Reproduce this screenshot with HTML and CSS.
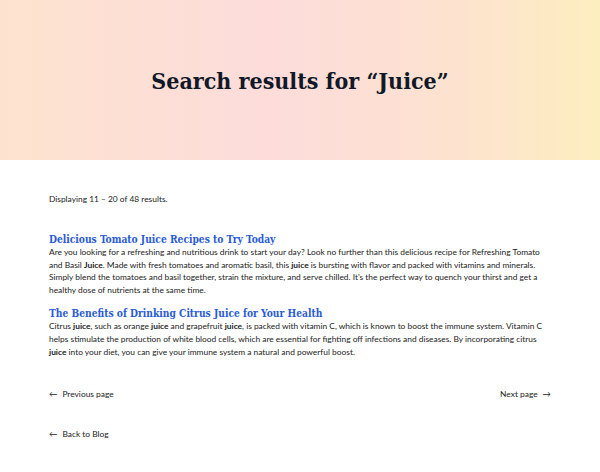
FILE: index.html
```html
<!DOCTYPE html>
<html lang="en">
<head>
<meta charset="utf-8">
<title>Search results for “Juice”</title>
<link rel="stylesheet" href="styles.css">
</head>
<body>
<header class="hero">
  <h1 class="hero-title">Search results for “Juice”</h1>
</header>
<main class="content">
  <p class="count">Displaying 11 – 20 of 48 results.</p>
  <article class="result">
    <h2 class="result-title"><a href="#">Delicious Tomato Juice Recipes to Try Today</a></h2>
    <p class="result-text">Are you looking for a refreshing and nutritious drink to start your day? Look no further than this delicious recipe for Refreshing Tomato and Basil <b>Juice</b>. Made with fresh tomatoes and aromatic basil, this <b>juice</b> is bursting with flavor and packed with vitamins and minerals. Simply blend the tomatoes and basil together, strain the mixture, and serve chilled. It's the perfect way to quench your thirst and get a healthy dose of nutrients at the same time.</p>
  </article>
  <article class="result">
    <h2 class="result-title"><a href="#">The Benefits of Drinking Citrus Juice for Your Health</a></h2>
    <p class="result-text">Citrus <b>juice</b>, such as orange <b>juice</b> and grapefruit <b>juice</b>, is packed with vitamin C, which is known to boost the immune system. Vitamin C helps stimulate the production of white blood cells, which are essential for fighting off infections and diseases. By incorporating citrus <b>juice</b> into your diet, you can give your immune system a natural and powerful boost.</p>
  </article>
  <nav class="pager">
    <a href="#" class="pager-link"><span class="arrow">←</span>Previous page</a>
    <a href="#" class="pager-link">Next page<span class="arrow arrow-r">→</span></a>
  </nav>
  <a href="#" class="back"><span class="arrow">←</span>Back to Blog</a>
</main>
</body>
</html>
```
FILE: styles.css
```css
html, body { margin: 0; padding: 0; }
body {
  font-family: Lato, "Noto Sans", sans-serif;
  color: #222;
  background: #fff;
}
.hero {
  height: 160px;
  display: flex;
  align-items: center;
  justify-content: center;
  background: linear-gradient(90deg, #fde3cf 0%, #fddcda 45%, #fde2d0 75%, #fdeebf 100%);
}
.hero-title {
  margin: 0;
  font-family: "DejaVu Serif Condensed", "DejaVu Serif", serif;
  font-stretch: condensed;
  font-weight: bold;
  font-size: 23px;
  color: #111827;
}
.content {
  padding: 0 49px;
}
.count {
  margin: 33px 0 0;
  font-size: 8.4px;
  line-height: 13px;
}
.result { margin-top: 26px; }
.result + .result { margin-top: 10px; }
.result-title {
  margin: 0;
  font-family: "DejaVu Serif Condensed", "DejaVu Serif", serif;
  font-stretch: condensed;
  font-size: 10.2px;
  font-weight: bold;
  line-height: 14px;
}
.result-title a { color: #2a5bd7; text-decoration: none; }
.result-text {
  margin: 0;
  font-size: 8.4px;
  line-height: 12.6px;
}
.result-text b { font-weight: bold; }
.pager {
  margin-top: 30px;
  display: flex;
  justify-content: space-between;
}
.pager-link, .back {
  color: #222;
  text-decoration: none;
  font-size: 8.4px;
  line-height: 13px;
}
.arrow { margin-right: 5px; }
.arrow-r { margin-right: 0; margin-left: 5px; }
.back { display: inline-block; margin-top: 27px; }
```
